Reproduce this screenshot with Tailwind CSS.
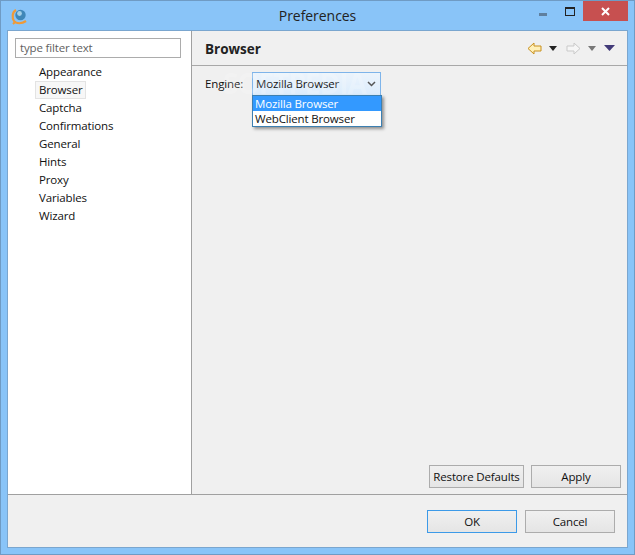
<!DOCTYPE html>
<html lang="en">
<head>
<meta charset="UTF-8">
<title>Preferences</title>
<script src="https://cdn.jsdelivr.net/npm/@tailwindcss/browser@4"></script>
</head>
<body class="bg-[#89c4f8]">
<div class="w-[635px] h-[555px] flex flex-col border border-[#6f9bc4] bg-[#89c4f8] font-['Open_Sans',sans-serif] text-[11.5px] tracking-[-0.15px] text-[#111] overflow-hidden">
  <!-- Title bar -->
  <div class="h-[29px] flex shrink-0">
    <svg class="ml-[10px] mt-[7px] w-[17px] h-[17px]" viewBox="0 0 17 17">
      <path d="M5 2 C1 4 1 10 3 13 C5 16 11 16 15 13" fill="none" stroke="#ef9a38" stroke-width="2.2"/>
      <path d="M4 14 L2 16" stroke="#ef9a38" stroke-width="2"/>
      <circle cx="9.5" cy="7" r="5.2" fill="#3f87b8"/>
      <circle cx="8.5" cy="5.5" r="2.4" fill="#a5d0e6"/>
    </svg>
    <div class="flex-1 text-center text-[14px] tracking-[-0.05px] leading-[30px] text-[#222] pl-[68px]">Preferences</div>
    <div class="w-[8px] h-[3px] mt-[12px] mr-[18px] bg-[#5f7f9e]"></div>
    <div class="w-[8px] h-[6px] mt-[6px] mr-[8px] box-content border border-t-[2px] border-[#222]"></div>
    <div class="w-[45px] h-[20px] bg-[#c75050] flex items-center justify-center mr-[6px]">
      <svg class="w-[9px] h-[9px]" viewBox="0 0 9 9"><path d="M1 1 L8 8 M8 1 L1 8" stroke="#fff" stroke-width="2"/></svg>
    </div>
  </div>
  <!-- Client area -->
  <div class="ml-[6px] w-[621px] h-[518px] flex flex-col bg-[#f0f0f0] border border-[#7aa6cf]">
    <div class="flex flex-1 min-h-0">
      <!-- Tree -->
      <div class="w-[184px] bg-white border-r border-[#a0a0a0] pt-[7px] pl-[7px] shrink-0">
        <div class="w-[166px] h-[20px] border border-[#acacac] pl-[4px] leading-[18px] text-[#5f5f5f]">type filter text</div>
        <ul class="mt-[5px] leading-[18px]">
          <li class="pl-[24px]">Appearance</li>
          <li class="pl-[20px]"><span class="inline-block h-[18px] pl-[3px] pr-[2px] bg-[#f7f7f7] border border-[#e3e3e3] leading-[16px]">Browser</span></li>
          <li class="pl-[24px]">Captcha</li>
          <li class="pl-[24px]">Confirmations</li>
          <li class="pl-[24px]">General</li>
          <li class="pl-[24px]">Hints</li>
          <li class="pl-[24px]">Proxy</li>
          <li class="pl-[24px]">Variables</li>
          <li class="pl-[24px]">Wizard</li>
        </ul>
      </div>
      <!-- Page -->
      <div class="flex-1 flex flex-col">
        <div class="h-[35px] flex items-center border-b border-[#a8a8a8] pl-[13px] pr-[12px] shrink-0">
          <div class="font-bold text-[13.5px] tracking-normal text-[#222] pt-[2px]">Browser</div>
          <div class="ml-auto flex items-center">
            <svg class="w-[15px] h-[13px]" viewBox="0 0 15 13"><path d="M7 1 L1 6.5 L7 12 V9 H14 V4 H7 Z" fill="#fff0b8" stroke="#c8901c"/></svg>
            <svg class="ml-[7px] w-[8px] h-[5px]" viewBox="0 0 8 5"><path d="M0 0 H8 L4 5 Z" fill="#222"/></svg>
            <svg class="ml-[9px] w-[15px] h-[13px]" viewBox="0 0 15 13"><path d="M8 1 L14 6.5 L8 12 V9 H1 V4 H8 Z" fill="#f6f6f6" stroke="#c9c9c9"/></svg>
            <svg class="ml-[7px] w-[8px] h-[5px]" viewBox="0 0 8 5"><path d="M0 0 H8 L4 5 Z" fill="#777"/></svg>
            <svg class="ml-[8px] w-[11px] h-[6px]" viewBox="0 0 11 6"><path d="M0 0 H11 L5.5 6 Z" fill="#413a78"/></svg>
          </div>
        </div>
        <div class="flex-1 relative flex flex-col pl-[13px] pr-[6px] pb-[6px]">
          <div class="flex items-center mt-[6px]">
            <span class="w-[47px]">Engine:</span>
            <div class="w-[129px] h-[24px] border border-[#7eb4ea] bg-gradient-to-b from-[#ecf4fc] to-[#dcecfc] flex items-center pl-[3px]">
              <span>Mozilla Browser</span>
              <svg class="ml-auto mr-[4px] w-[9px] h-[6px]" viewBox="0 0 9 6"><path d="M1 1 L4.5 4.5 L8 1" fill="none" stroke="#555" stroke-width="1.5"/></svg>
            </div>
          </div>
          <!-- open dropdown list -->
          <div class="absolute left-[60px] top-[29px] w-[130px] h-[32px] bg-white border border-[#3c7fb1] shadow-[2px_2px_3px_rgba(0,0,0,0.4)] z-10">
            <div class="h-[15px] leading-[15px] pl-[2px] bg-[#3399ff] text-white">Mozilla Browser</div>
            <div class="h-[15px] leading-[15px] pl-[2px]">WebClient Browser</div>
          </div>
          <div class="absolute left-[31px] top-[2px] text-[28px] leading-[30px] font-bold tracking-[-1px] text-white/20 pointer-events-none z-20">SOFTPEDIA</div>
          <div class="mt-auto flex justify-end gap-[7px]">
            <div class="w-[95px] h-[23px] border border-[#acacac] bg-gradient-to-b from-[#f0f0f0] to-[#e5e5e5] text-center leading-[21px] whitespace-nowrap">Restore Defaults</div>
            <div class="w-[90px] h-[23px] border border-[#acacac] bg-gradient-to-b from-[#f0f0f0] to-[#e5e5e5] text-center leading-[21px]">Apply</div>
          </div>
        </div>
      </div>
    </div>
    <!-- Footer -->
    <div class="h-[53px] shrink-0 border-t border-[#a0a0a0] flex items-start justify-end gap-[8px] pt-[15px] pr-[12px]">
      <div class="w-[90px] h-[23px] border border-[#3c9ae8] bg-gradient-to-b from-[#f0f0f0] to-[#e5e5e5] text-center leading-[21px]">OK</div>
      <div class="w-[90px] h-[23px] border border-[#acacac] bg-gradient-to-b from-[#f0f0f0] to-[#e5e5e5] text-center leading-[21px]">Cancel</div>
    </div>
  </div>
</div>
</body>
</html>
